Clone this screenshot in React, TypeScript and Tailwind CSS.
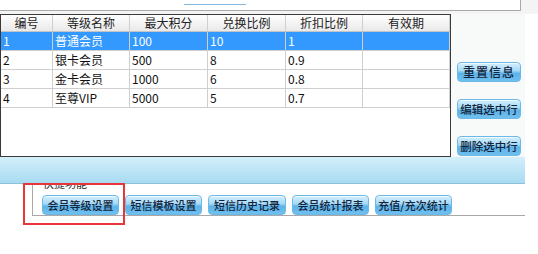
import React from "react";

const font = { fontFamily: '"Noto Sans CJK SC", "Liberation Sans", sans-serif' };

const cols = ["编号", "等级名称", "最大积分", "兑换比例", "折扣比例", "有效期"];

const rows = [
  ["1", "普通会员", "100", "10", "1", ""],
  ["2", "银卡会员", "500", "8", "0.9", ""],
  ["3", "金卡会员", "1000", "6", "0.8", ""],
  ["4", "至尊VIP", "5000", "5", "0.7", ""],
];

const gridCols = "grid grid-cols-[52px_77px_78px_78px_77px_1fr]";

function BlueButton({ label, className = "" }: { label: string; className?: string }) {
  return (
    <button
      className={`h-[20px] rounded-[4px] border border-[#6cb9e6] bg-[linear-gradient(to_bottom,#d4effd_0%,#a6daf6_42%,#5db3e8_58%,#6fc0ef_100%)] leading-[18px] font-medium text-[#14243c] whitespace-nowrap overflow-hidden shadow-[inset_0_1px_0_#eefaff] ${className}`}
    >
      {label}
    </button>
  );
}

export default function App() {
  return (
    <div className="relative w-[538px] h-[254px] overflow-hidden bg-white" style={font}>
      {/* top strip */}
      <div className="h-[14px] bg-[#f4f4f4]">
        <div className="relative h-[11px] w-[521px] border-b border-r border-[#a9a9a9] bg-white">
          <div className="absolute left-[184px] top-[4px] h-[1px] w-[62px] bg-[#7fb8e0]" />
        </div>
      </div>

      {/* table + side buttons */}
      <div className="flex h-[143px] w-[525px] bg-[#f8f9f9]">
        <div className="w-[451px] h-full border border-[#3a3a3a] bg-white">
          <div className={`${gridCols} h-[17px] border-b border-[#c4c4c4] bg-[linear-gradient(to_bottom,#ffffff,#e9e9e9)]`}>
            {cols.map((c) => (
              <div key={c} className="border-r border-[#cfcfcf] text-center text-[12px] leading-[16px] text-[#222]">
                {c}
              </div>
            ))}
          </div>
          {rows.map((r, i) => (
            <div
              key={i}
              className={`${gridCols} h-[19px] border-b border-[#cfcfcf] ${i === 0 ? "bg-[#3399ff] text-white" : "text-[#111]"}`}
            >
              {r.map((v, j) => (
                <div key={j} className="border-r border-[#cfcfcf] pl-[2px] text-[12px] leading-[18px] whitespace-nowrap">
                  {v}
                </div>
              ))}
            </div>
          ))}
        </div>
        <div className="flex flex-col gap-[17px] pt-[48px] pl-[6px]">
          <BlueButton label="重置信息" className="w-[64px] text-[12px] tracking-[1px]" />
          <BlueButton label="编辑选中行" className="w-[64px] text-[11.5px]" />
          <BlueButton label="删除选中行" className="w-[64px] text-[11.5px]" />
        </div>
      </div>

      {/* blue band */}
      <div className="relative z-10 h-[27px] w-[525px] border-b border-[#8cc3dd] bg-[linear-gradient(to_bottom,#d3effb,#a8dbf1)]" />

      {/* quick functions group */}
      <div className="ml-[32px] w-[493px] h-[40px] border-l border-b border-[#a8a8a8]">
        <div className="-mt-[8px] ml-[10px] text-[11px] leading-[14px] text-[#333]">快捷功能</div>
        <div className="mt-[5px] ml-[9px] flex gap-[6px]">
          <BlueButton label="会员等级设置" className="w-[77px] text-[11px]" />
          <BlueButton label="短信模板设置" className="w-[77px] text-[11px]" />
          <BlueButton label="短信历史记录" className="w-[78px] text-[11px]" />
          <BlueButton label="会员统计报表" className="w-[77px] text-[11px]" />
          <BlueButton label="充值/充次统计" className="w-[77px] text-[11px]" />
        </div>
      </div>

      {/* highlight box */}
      <div className="absolute left-[23px] top-[183px] z-20 w-[102px] h-[42px] border-2 border-[#e8353a]" />
    </div>
  );
}
